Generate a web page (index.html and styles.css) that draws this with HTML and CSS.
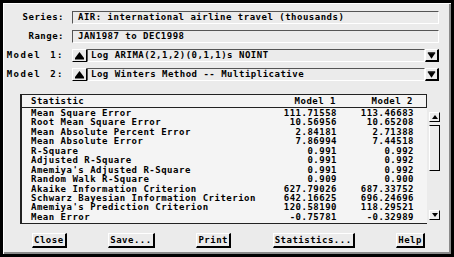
FILE: index.html
```
<!DOCTYPE html>
<html>
<head>
  <title>Model Fit Comparison</title>
  <link rel="stylesheet" href="styles.css">
</head>
<body>
  <div class="window">
    <div class="form">
      <div class="row">
        <span class="label">Series:</span>
        <div class="field">AIR: international airline travel (thousands)</div>
      </div>
      <div class="row">
        <span class="label">Range:</span>
        <div class="field">JAN1987 to DEC1998</div>
      </div>
      <div class="row">
        <span class="label model">Model 1:</span>
        <span class="arrow-btn">
          <svg width="13" height="11" viewBox="0 0 13 11"><polygon points="2,8 6.5,2 11,8" fill="#000"/><rect x="2" y="8" width="9" height="1.5" fill="#000"/></svg>
        </span>
        <div class="field combo">Log ARIMA(2,1,2)(0,1,1)s NOINT</div>
        <span class="arrow-btn drop">
          <svg width="12" height="11" viewBox="0 0 12 11"><rect x="2" y="2" width="8" height="1.5" fill="#000"/><polygon points="2,3 10,3 6,9" fill="#000"/></svg>
        </span>
      </div>
      <div class="row">
        <span class="label model">Model 2:</span>
        <span class="arrow-btn">
          <svg width="13" height="11" viewBox="0 0 13 11"><polygon points="2,8 6.5,2 11,8" fill="#000"/><rect x="2" y="8" width="9" height="1.5" fill="#000"/></svg>
        </span>
        <div class="field combo">Log Winters Method -- Multiplicative</div>
        <span class="arrow-btn drop">
          <svg width="12" height="11" viewBox="0 0 12 11"><rect x="2" y="2" width="8" height="1.5" fill="#000"/><polygon points="2,3 10,3 6,9" fill="#000"/></svg>
        </span>
      </div>
    </div>

    <div class="table-area">
      <div class="stats">
        <div class="stats-head">
          <span>Statistic</span><span class="num">Model 1</span><span class="num">Model 2</span>
        </div>
        <div class="stats-body">
          <div class="stat-row"><span>Mean Square Error</span><span class="num">111.71558</span><span class="num">113.46683</span></div>
          <div class="stat-row"><span>Root Mean Square Error</span><span class="num">10.56956</span><span class="num">10.65208</span></div>
          <div class="stat-row"><span>Mean Absolute Percent Error</span><span class="num">2.84181</span><span class="num">2.71388</span></div>
          <div class="stat-row"><span>Mean Absolute Error</span><span class="num">7.86994</span><span class="num">7.44518</span></div>
          <div class="stat-row"><span>R-Square</span><span class="num">0.991</span><span class="num">0.992</span></div>
          <div class="stat-row"><span>Adjusted R-Square</span><span class="num">0.991</span><span class="num">0.992</span></div>
          <div class="stat-row"><span>Amemiya's Adjusted R-Square</span><span class="num">0.991</span><span class="num">0.992</span></div>
          <div class="stat-row"><span>Random Walk R-Square</span><span class="num">0.909</span><span class="num">0.900</span></div>
          <div class="stat-row"><span>Akaike Information Criterion</span><span class="num">627.79026</span><span class="num">687.33752</span></div>
          <div class="stat-row"><span>Schwarz Bayesian Information Criterion</span><span class="num">642.16625</span><span class="num">696.24696</span></div>
          <div class="stat-row"><span>Amemiya's Prediction Criterion</span><span class="num">120.58190</span><span class="num">118.29521</span></div>
          <div class="stat-row"><span>Mean Error</span><span class="num">-0.75781</span><span class="num">-0.32989</span></div>
        </div>
      </div>
      <div class="scrollbar">
        <span class="scroll-btn">
          <svg width="8" height="8" viewBox="0 0 8 8"><polygon points="1,6 4,2 7,6" fill="#000"/></svg>
        </span>
        <span class="thumb"></span>
        <span class="scroll-btn bottom">
          <svg width="8" height="8" viewBox="0 0 8 8"><polygon points="1,2 7,2 4,6" fill="#000"/></svg>
        </span>
      </div>
    </div>

    <div class="buttons">
      <button>Close</button>
      <button>Save...</button>
      <button>Print</button>
      <button>Statistics...</button>
      <button>Help</button>
    </div>
  </div>
</body>
</html>
```

FILE: styles.css
```
body {
  margin: 0;
  font-family: "DejaVu Sans Mono", monospace;
  font-weight: bold;
  font-size: 9px;
  letter-spacing: 0.5px;
  color: #000;
}

.window {
  width: 454px;
  height: 257px;
  box-sizing: border-box;
  border: 3px solid #000;
  background-color: #ebebeb;
  box-shadow: inset 1px 1px #fff, inset -2px -2px #8a8a8a;
  display: flex;
  flex-direction: column;
}

.form {
  display: flex;
  flex-direction: column;
  gap: 6px;
  padding: 8px 12px 0 0;
}

.row {
  display: flex;
  height: 13px;
}

.label {
  width: 61px;
  margin-right: 8px;
  text-align: right;
  line-height: 13px;
  white-space: nowrap;
}

.label.model {
  letter-spacing: 1.5px;
  word-spacing: 2px;
}

.field {
  flex: 1;
  box-sizing: border-box;
  border-top: 1px solid #555;
  border-left: 1px solid #555;
  border-right: 1px solid #fff;
  border-bottom: 1px solid #fff;
  padding-left: 5px;
  line-height: 11px;
  white-space: nowrap;
}

.field.combo {
  padding-left: 3px;
}

.arrow-btn {
  width: 15px;
  box-sizing: border-box;
  border-top: 1px solid #fff;
  border-left: 1px solid #fff;
  border-right: 1px solid #000;
  border-bottom: 1px solid #000;
  display: flex;
  align-items: center;
  justify-content: center;
}

.arrow-btn.drop {
  width: 14px;
  border-right-width: 2px;
  border-bottom-width: 2px;
}

.table-area {
  display: flex;
  gap: 2px;
  margin: 13px 0 0 17px;
  height: 130px;
}

.stats {
  width: 407px;
  box-sizing: border-box;
  border-left: 2px solid #222;
  border-top: 1px solid #222;
  border-bottom: 1px solid #222;
  background-color: #f4f4f4;
}

.stats-head,
.stat-row {
  display: grid;
  grid-template-columns: 1fr 80px 77px;
  padding: 0 13px 0 9px;
  white-space: nowrap;
}

.stats-head {
  height: 13px;
  line-height: 13px;
  box-sizing: border-box;
  border-right: 1px solid #222;
  border-bottom: 1px solid #222;
}

.stats-body {
  padding-top: 1px;
}

.stat-row {
  height: 9.45px;
  line-height: 9.45px;
}

.num {
  text-align: right;
}

.scrollbar {
  width: 11px;
  margin-top: 18px;
  height: 108px;
  display: flex;
  flex-direction: column;
}

.scroll-btn {
  height: 10px;
  box-sizing: border-box;
  border-top: 1px solid #fff;
  border-left: 1px solid #fff;
  border-right: 1px solid #000;
  border-bottom: 1px solid #000;
  display: flex;
  align-items: center;
  justify-content: center;
}

.scroll-btn.bottom {
  margin-top: auto;
}

.thumb {
  margin-top: 3px;
  height: 46px;
  box-sizing: border-box;
  border-top: 1px solid #000;
  border-left: 1px solid #fff;
  border-right: 1px solid #000;
  border-bottom: 1px solid #000;
}

.buttons {
  display: flex;
  justify-content: space-between;
  margin-top: 9px;
  padding: 0 26px 0 29px;
}

.buttons button {
  height: 15px;
  padding: 0 1px;
  font: inherit;
  letter-spacing: inherit;
  background-color: #ebebeb;
  border-top: 1px solid #fff;
  border-left: 1px solid #fff;
  border-right: 2px solid #000;
  border-bottom: 2px solid #000;
  line-height: 11px;
}
```
